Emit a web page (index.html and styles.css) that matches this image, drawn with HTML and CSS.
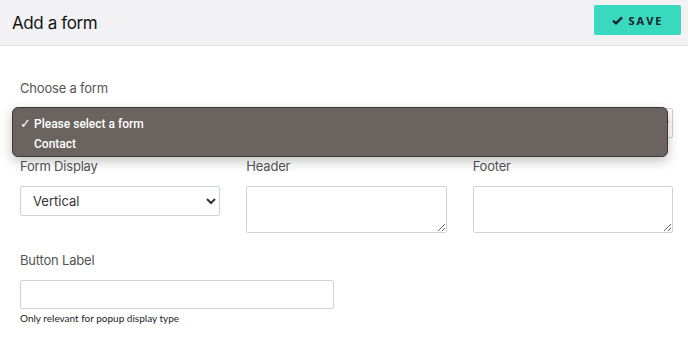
FILE: index.html
```html
<!DOCTYPE html>
<html lang="en">
<head>
    <meta charset="UTF-8">
    <meta name="viewport" content="width=device-width, initial-scale=1.0">
    <title>Add a form</title>
    <link rel="stylesheet" href="styles.css">
</head>
<body>
<div class="topbar">
    <h1 class="title">Add a form</h1>
    <button class="save" type="button">
        <svg width="11" height="9" viewBox="0 0 11 9"><path d="M1 4.6 L4 7.4 L10 1.4" fill="none" stroke="#14202b" stroke-width="2.2"/></svg>
        SAVE
    </button>
</div>
<div class="content">
    <div class="field">
        <label>Choose a form</label>
        <div class="picker">
            <select class="wide">
                <option>Please select a form</option>
                <option>Contact</option>
            </select>
            <div class="menu">
                <div class="opt"><span class="tick">&#10003;</span>Please select a form</div>
                <div class="opt">Contact</div>
            </div>
        </div>
    </div>
    <div class="row">
        <div class="field">
            <label>Form Display</label>
            <select class="display">
                <option>Vertical</option>
                <option>Horizontal</option>
                <option>Popup</option>
            </select>
        </div>
        <div class="field">
            <label>Header</label>
            <textarea></textarea>
        </div>
        <div class="field">
            <label>Footer</label>
            <textarea></textarea>
        </div>
    </div>
    <div class="field">
        <label>Button Label</label>
        <input type="text" class="short">
        <small class="help">Only relevant for popup display type</small>
    </div>
</div>
</body>
</html>
```
FILE: styles.css
```css
body {
    margin: 0;
    background: white;
    font-family: Inter, "Noto Sans", sans-serif;
    color: #222;
}
.topbar {
    display: flex;
    justify-content: space-between;
    align-items: center;
    height: 45px;
    padding: 0 7px 0 12px;
    background: #f2f2f4;
    border-bottom: 1px solid #e2e2e4;
}
.title {
    margin: 0;
    font-size: 17px;
    font-weight: 400;
    color: #151515;
    letter-spacing: -0.4px;
}
.save {
    display: flex;
    align-items: center;
    justify-content: center;
    gap: 6px;
    width: 87px;
    height: 30px;
    margin-top: -5px;
    border: none;
    border-radius: 2px;
    background: #38d9be;
    color: #14202b;
    font-family: "Open Sans", sans-serif;
    font-weight: 700;
    font-size: 11px;
    letter-spacing: 2px;
}
.content {
    padding: 34px 15px 0 20px;
}
.field {
    display: flex;
    flex-direction: column;
}
label {
    font-size: 13px;
    color: #555;
    margin-bottom: 12px;
    letter-spacing: -0.2px;
}
.picker {
    position: relative;
    height: 30px;
    margin-bottom: 20px;
}
select, textarea, input {
    box-sizing: border-box;
    border: 1px solid #cfd3d6;
    border-radius: 2px;
    background: white;
    font-family: Inter, sans-serif;
    font-size: 13px;
    color: #333;
}
.wide {
    width: 100%;
    height: 30px;
}
.menu {
    position: absolute;
    left: -8px;
    right: 5px;
    top: -1px;
    height: 50px;
    box-sizing: border-box;
    padding: 6px 0 0 6px;
    background: #6b635f;
    border: 1px solid #3d3835;
    border-radius: 6px;
    box-shadow: 0 4px 12px rgba(0, 0, 0, 0.25);
    color: white;
    font-family: Roboto, sans-serif;
    font-size: 12px;
    font-weight: 500;
}
.opt {
    height: 20px;
    line-height: 20px;
    padding-left: 15px;
    position: relative;
}
.tick {
    position: absolute;
    left: 1px;
    font-size: 13px;
    font-weight: 400;
}
.row {
    display: grid;
    grid-template-columns: repeat(3, 1fr);
    gap: 26px;
    margin-bottom: 19px;
}
.display {
    height: 30px;
    padding-left: 8px;
}
textarea {
    height: 47px;
    resize: vertical;
}
.short {
    width: 314px;
    height: 29px;
}
.help {
    margin-top: 3px;
    font-family: Lato, sans-serif;
    font-size: 10px;
    color: #1d1d1d;
}
```
